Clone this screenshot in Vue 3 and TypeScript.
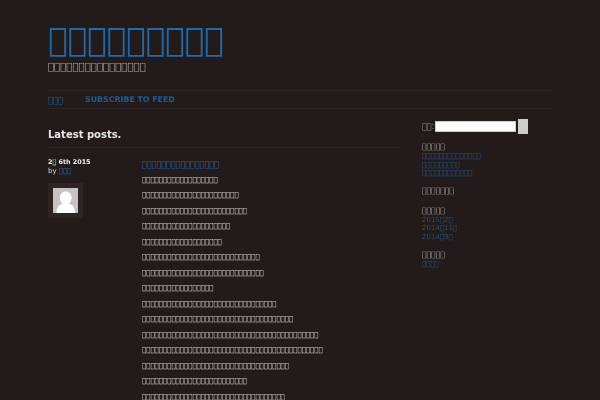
<script setup lang="ts">
const t = (n: number) => '\uE000'.repeat(n)
const lines = [18, 23, 25, 21, 19, 28, 29, 17, 32, 36, 42, 43, 35, 25, 34]
const recent = [14, 9, 12]
const archives = ['2015' + t(1) + '2' + t(1), '2014' + t(1) + '11' + t(1), '2014' + t(1) + '9' + t(1)]
</script>

<template>
  <div class="page">
    <header class="masthead">
      <h1 class="title"><a>{{ t(9) }}</a></h1>
      <p class="tagline">{{ t(16) }}</p>
    </header>
    <nav class="nav">
      <a>{{ t(3) }}</a>
      <a>SUBSCRIBE TO FEED</a>
    </nav>
    <div class="columns">
      <main class="main">
        <h2 class="latest">Latest posts.</h2>
        <article class="post">
          <div class="meta">
            <div class="date">2{{ t(1) }} 6th 2015</div>
            <div class="by">by <a>{{ t(3) }}</a></div>
            <div class="avatar">
              <svg width="25" height="25" viewBox="0 0 25 25">
                <rect width="25" height="25" fill="#c4c4c4" />
                <ellipse cx="12.700" cy="9.800" rx="6" ry="6.500" fill="#fff" />
                <path d="M3.500 25c0-5 1.500-8 6-9.500h6.500c4.500 1.500 6 4.500 6 9.500z" fill="#fff" />
              </svg>
            </div>
          </div>
          <div class="body">
            <h3 class="post-title"><a>{{ t(16) }}</a></h3>
            <p v-for="(n, i) in lines" :key="i">{{ t(n) }}</p>
          </div>
        </article>
      </main>
      <aside class="side">
        <form class="search">
          <label>{{ t(2) }}:</label>
          <input type="text" />
          <button type="button"></button>
        </form>
        <section>
          <h4>{{ t(5) }}</h4>
          <a v-for="(n, i) in recent" :key="i">{{ t(n) }}</a>
        </section>
        <section class="empty">
          <h4>{{ t(7) }}</h4>
        </section>
        <section>
          <h4>{{ t(5) }}</h4>
          <a v-for="(a, i) in archives" :key="i">{{ a }}</a>
        </section>
        <section>
          <h4>{{ t(5) }}</h4>
          <a>{{ t(4) }}</a>
        </section>
      </aside>
    </div>
  </div>
</template>

<style>
html, body { margin: 0; background: #231b1a; }
</style>

<style scoped>
.page {
  height: 400px;
  overflow: hidden;
  box-sizing: border-box;
  padding: 0 48px;
  background: #231b1a;
  font-family: "DejaVu Sans", sans-serif;
  color: #ddd;
  font-size: 7px;
  filter: blur(0.3px);
}
a { color: #1d5f9e; }
.title { margin: 0; padding-top: 18px; font-size: 32.500px; font-weight: 400; line-height: 44px; }
.title a { color: #1e6bb0; }
.tagline { margin: 0; font-size: 10.200px; line-height: 10px; color: #aaa4a2; }
.nav {
  margin-top: 18px;
  height: 17px;
  border-top: 1px solid #2e2625;
  border-bottom: 1px solid #2e2625;
  display: flex;
  align-items: center;
  gap: 22px;
  font-size: 7.850px;
  font-weight: 700;
}
.nav a:first-child { font-size: 8.400px; font-weight: 400; }
.columns { display: flex; }
.main { width: 354px; margin-right: 20px; flex: none; }
.latest { margin: 20px 0 0; font-size: 10px; line-height: 12px; color: #e6e6e6; padding-bottom: 6px; border-bottom: 1px solid #2a2221; }
.post { display: flex; padding-top: 10px; }
.meta { width: 94px; flex: none; line-height: 9px; }
.date { font-weight: 700; font-size: 6.400px; color: #eee; }
.by a { color: #2468ab; }
.avatar { margin-top: 6.600px; width: 25px; height: 25px; padding: 5px; background: #2e2422; }
.avatar svg { display: block; }
.post-title { margin: 0 0 1.500px; font-size: 8px; font-weight: 400; line-height: 13px; }
.post-title a { color: #2468ab; }
.body { white-space: nowrap; }
.body p { margin: 0; height: 15.500px; line-height: 15.500px; color: #d4d2d0; font-size: 7px; }
.side { width: 130px; }
.search { display: flex; align-items: center; margin-top: 10px; margin-bottom: 3px; color: #8f8987; font-size: 8px; height: 14.500px; }
.search label { width: 13px; flex: none; }
.search input { width: 79px; height: 9px; margin: 0 1.500px 0 0; padding: 0; border: 1px solid #ccc; background: #fff; }
.search button { width: 10px; height: 14.500px; padding: 0; border: 0; background: #cfccc6; }
section { margin-top: 8.500px; display: flex; flex-direction: column; line-height: 8.600px; }
section.empty { padding-bottom: 1px; }
h4 { margin: 0; font-size: 7.600px; font-weight: 400; color: #b5afad; line-height: 10px; }
section a { color: #24507e; }
</style>
